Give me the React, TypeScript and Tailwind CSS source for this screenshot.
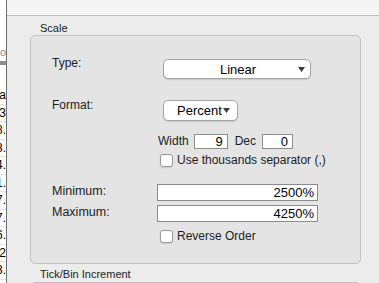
import React from "react";

const rows = ["a", "3", "8.", "3.", "4.", "1.", "7.", "7.", "6.", "2", "3."];

function Arrow() {
  return (
    <svg width="7" height="5" viewBox="0 0 7 5" className="shrink-0">
      <path d="M0 0h7L3.5 5z" fill="#3c3c3c" />
    </svg>
  );
}

function Check({ label }: { label: string }) {
  return (
    <div className="ml-[108px] flex h-[14px] items-center">
      <span className="h-[13px] w-[13px] rounded-[3px] border border-[#9c9c9c] bg-white shadow-[0_0.5px_1px_rgba(0,0,0,0.12)]" />
      <span className="ml-[4px] text-[12px] leading-[14px] text-[#1c1c1c]">{label}</span>
    </div>
  );
}

function Field({ value, className }: { value: string; className: string }) {
  return (
    <div
      className={`flex items-center justify-end border border-[#8c8c8c] bg-white pr-[3px] text-[13px] leading-none text-black ${className}`}
    >
      {value}
    </div>
  );
}

export default function App() {
  return (
    <div className="flex h-[283px] w-[379px] overflow-hidden font-['Liberation_Sans',Arial,sans-serif] text-[#1c1c1c]">
      {/* table edge on the left */}
      <div className="flex w-[7px] shrink-0 flex-col border-r border-[#6f6f6f] bg-white">
        <div className="mt-[45px] flex h-[14px] justify-end overflow-hidden whitespace-nowrap text-[11px] leading-[14px] text-[#8a8a8a]">
          o
        </div>
        <div className="mt-[2px] h-[4px] bg-[#8e8e8e]" />
        <div className="h-[22px]" />
        {rows.map((r, i) => (
          <div
            key={i}
            className="flex h-[17.5px] items-center justify-end overflow-hidden whitespace-nowrap border-b border-[#e2e2e2] text-[12px] leading-none text-black"
          >
            {r}
          </div>
        ))}
      </div>

      <div className="flex flex-1 flex-col bg-[#ececec]">
        <div className="h-[16px] shrink-0 border-b border-[#bcbcbc] bg-[#f5f5f5]" />

        <div className="mt-[5px] pl-[33px] text-[11px] leading-[14px] text-[#222]">Scale</div>

        <div className="ml-[23px] flex h-[229px] w-[331px] shrink-0 flex-col rounded-[5px] border border-[#c2c2c2] bg-[#e4e4e4] pl-[21px]">
          {/* Type */}
          <div className="mt-[19px] flex items-start">
            <span className="w-[111px] text-[12px] leading-[16px]">Type:</span>
            <div className="mt-[4px] flex h-[20px] w-[148px] items-center rounded-[5px] border border-[#a4a4a4] bg-white pl-[14px] pr-[5px] shadow-[0_1px_1px_rgba(0,0,0,0.12)]">
              <span className="flex-1 text-center text-[13px] leading-none text-black">Linear</span>
              <Arrow />
            </div>
          </div>

          {/* Format */}
          <div className="mt-[18px] flex items-start">
            <span className="w-[111px] text-[12px] leading-[16px]">Format:</span>
            <div className="mt-[3px] flex h-[21px] w-[75px] items-center rounded-[5px] border border-[#a4a4a4] bg-white pl-[13px] shadow-[0_1px_1px_rgba(0,0,0,0.12)]">
              <span className="text-[13px] leading-none text-black">Percent</span>
              <span className="ml-[1px]">
                <Arrow />
              </span>
            </div>
          </div>

          {/* Width / Dec */}
          <div className="ml-[106px] mt-[13px] flex h-[15px] items-center text-[12px] leading-[15px]">
            <span>Width</span>
            <Field value="9" className="ml-[5px] h-[15px] w-[34px] pr-[4px]" />
            <span className="ml-[7px]">Dec</span>
            <Field value="0" className="ml-[6px] h-[15px] w-[31px] pr-[4px]" />
          </div>

          <div className="mt-[4px]">
            <Check label="Use thousands separator (,)" />
          </div>

          {/* Min / Max */}
          <div className="mt-[17px] flex items-start">
            <span className="w-[105px] text-[12.5px] leading-[15px]">Minimum:</span>
            <Field value="2500%" className="h-[17px] w-[161px]" />
          </div>
          <div className="mt-[4px] flex items-start">
            <span className="w-[105px] text-[12.5px] leading-[15px]">Maximum:</span>
            <Field value="4250%" className="h-[17px] w-[161px]" />
          </div>

          <div className="mt-[7px]">
            <Check label="Reverse Order" />
          </div>
        </div>

        <div className="mt-[3px] pl-[33px] text-[11px] leading-[14px] text-[#222]">Tick/Bin Increment</div>

        <div className="ml-[23px] mt-[1px] h-[20px] w-[331px] shrink-0 rounded-t-[5px] border border-[#c2c2c2] bg-[#e4e4e4]" />
      </div>
    </div>
  );
}
